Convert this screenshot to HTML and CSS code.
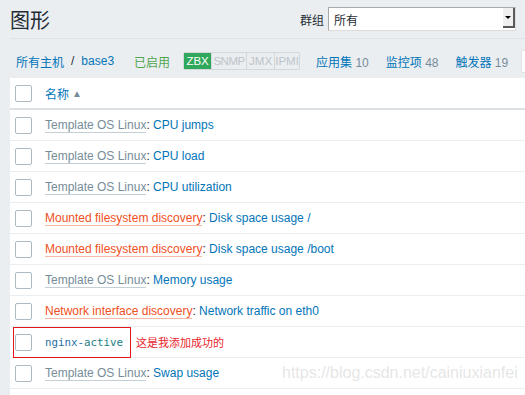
FILE: index.html
```html
<!DOCTYPE html>
<html lang="zh">

<head>
    <meta charset="UTF-8" />
    <meta name="viewport" content="width=device-width, initial-scale=1.0" />
    <title>图形</title>
    <link rel="stylesheet" href="styles.css">
</head>

<body>

    <div class="header">
        <h1>图形</h1>
        <div class="filter">
            <span class="filter-label">群组</span>
            <div class="select">
                <span>所有</span>
                <span class="select-btn"></span>
            </div>
        </div>
    </div>

    <div class="nav">
        <a class="link">所有主机</a>
        <span class="sep">/</span>
        <a class="link">base3</a>
        <span class="enabled">已启用</span>
        <span class="tags">
            <span class="tag on zbx">ZBX</span><span class="tag snmp">SNMP</span><span class="tag jmx">JMX</span><span class="tag ipmi">IPMI</span>
        </span>
        <span class="count first"><a class="link">应用集</a> 10</span>
        <span class="count"><a class="link">监控项</a> 48</span>
        <span class="count"><a class="link">触发器</a> 19</span>
        <span class="search"></span>
    </div>

    <div class="table">
        <div class="row head">
            <span class="cb"></span>
            <a class="link">名称</a><span class="sort">▲</span>
        </div>
        <div class="row">
            <span class="cb"></span>
            <span><a class="tpl">Template OS Linux</a>: <a class="link">CPU jumps</a></span>
        </div>
        <div class="row">
            <span class="cb"></span>
            <span><a class="tpl">Template OS Linux</a>: <a class="link">CPU load</a></span>
        </div>
        <div class="row">
            <span class="cb"></span>
            <span><a class="tpl">Template OS Linux</a>: <a class="link">CPU utilization</a></span>
        </div>
        <div class="row">
            <span class="cb"></span>
            <span><a class="disc">Mounted filesystem discovery</a>: <a class="link">Disk space usage /</a></span>
        </div>
        <div class="row">
            <span class="cb"></span>
            <span><a class="disc">Mounted filesystem discovery</a>: <a class="link">Disk space usage /boot</a></span>
        </div>
        <div class="row">
            <span class="cb"></span>
            <span><a class="tpl">Template OS Linux</a>: <a class="link">Memory usage</a></span>
        </div>
        <div class="row">
            <span class="cb"></span>
            <span><a class="disc">Network interface discovery</a>: <a class="link">Network traffic on eth0</a></span>
        </div>
        <div class="row">
            <div class="mark">
                <span class="cb"></span>
                <a class="mono"><span class="m1">nginx-</span><span class="m2">active</span></a>
            </div>
            <span class="note">这是我添加成功的</span>
        </div>
        <div class="row">
            <span class="cb"></span>
            <span><a class="tpl">Template OS Linux</a>: <a class="link">Swap usage</a></span>
        </div>
        <div class="row last"></div>
    </div>

    <div class="watermark">https://blog.csdn.net/cainiuxianfei</div>

</body>

</html>
```

FILE: styles.css
```css
body {
    margin: 0;
    padding-left: 10px;
    background: #ebeef1;
    font-family: "Liberation Sans", Arial, "Noto Sans CJK SC", sans-serif;
    font-size: 12px;
    color: #1f2c33;
    overflow: hidden;
    height: 395px;
    position: relative;
}

.header {
    display: flex;
    align-items: center;
    justify-content: space-between;
    height: 38px;
    border-bottom: 1px solid #dde2e6;
}

h1 {
    margin: 0;
    font-size: 20px;
    font-weight: normal;
    font-family: "Noto Sans CJK SC", sans-serif;
    line-height: 20px;
    padding-top: 2px;
}

.filter {
    display: flex;
    align-items: center;
    margin-right: 9px;
}

.filter-label {
    margin-right: 4px;
}

.select {
    box-sizing: border-box;
    width: 188px;
    height: 24px;
    background: white;
    border: 1px solid #a9a9a9;
    border-right-color: #dcdcdc;
    border-bottom-color: #dcdcdc;
    display: flex;
    align-items: center;
    justify-content: space-between;
    padding-left: 5px;
}

.select-btn {
    width: 12px;
    height: 20px;
    background: #f0f0f0;
    border-right: 2px solid #5a5a5a;
    border-bottom: 2px solid #5a5a5a;
    box-sizing: border-box;
    position: relative;
    align-self: flex-start;
}

.select-btn::after {
    content: "";
    position: absolute;
    left: 2px;
    top: 8px;
    border-left: 3px solid transparent;
    border-right: 3px solid transparent;
    border-top: 3px solid #000;
}

.nav {
    display: flex;
    align-items: center;
    height: 34px;
    padding-top: 5px;
    padding-left: 6px;
    white-space: nowrap;
}

.link {
    color: #0275b8;
}

.sep {
    margin: 0 7px 0 7px;
}

.enabled {
    color: #4ea64e;
    margin-left: 20px;
}

.tags {
    display: flex;
    margin-left: 13px;
    border: 1px solid #d3d8db;
    border-radius: 2px;
    font-size: 11.5px;
}

.tag {
    box-sizing: border-box;
    height: 16px;
    line-height: 16px;
    text-align: center;
    color: #bcc4c9;
    border-left: 1px solid #d3d8db;
}

.tag.zbx {
    width: 27px;
    border-left: none;
}

.tag.snmp {
    width: 35px;
    letter-spacing: -0.5px;
}

.tag.jmx {
    width: 28px;
}

.tag.ipmi {
    width: 25px;
}

.tag.on {
    background: #2fa85c;
    color: white;
}

.count {
    color: #768d99;
    margin-left: 17px;
}

.count.first {
    margin-left: 16px;
}

.search {
    display: block;
    width: 100px;
    height: 21px;
    background: white;
    border: 1px solid #dfe4e7;
    margin-left: 13px;
    flex-shrink: 0;
}

.table {
    background: white;
}

.row {
    display: flex;
    align-items: center;
    height: 30px;
    border-bottom: 1px solid #ebeef1;
}

.row.head {
    border-bottom: 2px solid #dbe0e4;
}

.cb {
    box-sizing: border-box;
    width: 17px;
    height: 17px;
    border: 1px solid #acbac2;
    border-radius: 2px;
    margin-left: 5px;
    margin-right: 13px;
    background: white;
    flex-shrink: 0;
}

.sort {
    color: #768d99;
    font-size: 10px;
    margin-left: 3px;
}

.tpl {
    color: #768d99;
    border-bottom: 1px solid #c4cfd5;
}

.disc {
    color: #f04f23;
    border-bottom: 1px solid #f6b9a6;
}

.mark {
    box-sizing: border-box;
    display: flex;
    align-items: center;
    align-self: flex-start;
    width: 118px;
    height: 31px;
    margin-left: 3px;
    margin-bottom: -1px;
    border: 1px solid #e3161d;
}

.mark .cb {
    margin-left: 1px;
}

.mono {
    font-family: "DejaVu Sans Mono", monospace;
    font-size: 10.8px;
}

.m1 {
    color: #1f6fa6;
}

.m2 {
    color: #1a7d84;
}

.note {
    color: #e8242a;
    margin-left: 5px;
    font-family: "Noto Sans CJK SC", sans-serif;
    font-size: 11px;
}

.watermark {
    position: absolute;
    left: 282px;
    top: 364px;
    font-size: 16px;
    color: rgba(190, 190, 190, 0.4);
}
```
